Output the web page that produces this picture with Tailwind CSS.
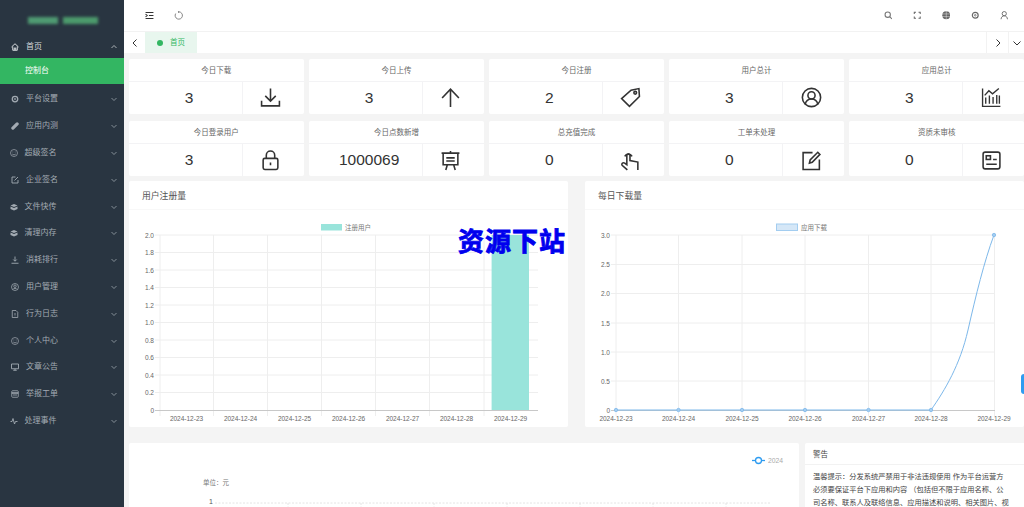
<!DOCTYPE html>
<html lang="zh-CN">

<head>
    <meta charset="UTF-8">
    <title>控制台</title>
    <script src="https://cdn.jsdelivr.net/npm/@tailwindcss/browser@4"></script>
</head>

<body class="bg-[#f4f4f4] overflow-hidden [font-family:'Liberation_Sans','Noto_Sans_CJK_SC',sans-serif]">
    <div class="relative flex w-[1024px] h-[507px] overflow-hidden">

        <!-- Sidebar -->
        <aside class="w-[123.5px] shrink-0 bg-[#293541] text-[#a3abb3] text-[8px] leading-none">
            <div class="h-[33px] flex items-center gap-[5px] pl-[28px] pt-[7px]">
                <div class="w-[30px] h-[7px] bg-[#4f9a72] blur-[1.5px]"></div>
                <div class="w-[35px] h-[7px] bg-[#4c9a6c] blur-[1.5px]"></div>
            </div>
            <nav>
                <div class="h-[25px] flex items-center pt-[2px] pl-[11px] pr-[7px] gap-[7px] text-[#d5d9dc]">
                    <svg class="w-[8px] h-[8px]" viewBox="0 0 16 16" fill="none" stroke="currentColor" stroke-width="2"><path d="M1 8 8 1.5 15 8M3.5 7v7.5h9V7M6.5 14.5V10h3v4.5"/></svg>
                    <span class="flex-1">首页</span>
                    <svg class="w-[6px] h-[6px]" viewBox="0 0 12 12" fill="none" stroke="currentColor" stroke-width="1.5"><path d="m1 8 5-5 5 5"/></svg>
                </div>
                <div class="h-[25.5px] mb-[2.6px] flex items-center pt-[1px] pl-[25px] bg-[#33b662] text-white">控制台</div>
                <div class="h-[26.8px] flex items-center pl-[11px] pr-[7px] gap-[7px]">
                    <svg class="w-[8px] h-[8px]" viewBox="0 0 16 16" fill="none" stroke="currentColor" stroke-width="2.5"><circle cx="8" cy="8" r="5.5"/><circle cx="8" cy="8" r="1.5" stroke-width="1.5"/></svg>
                    <span class="flex-1">平台设置</span>
                    <svg class="w-[6px] h-[6px]" viewBox="0 0 12 12" fill="none" stroke="currentColor" stroke-width="1.5"><path d="m1 4 5 5 5-5"/></svg>
                </div>
                <div class="h-[26.8px] flex items-center pl-[11px] pr-[7px] gap-[7px]">
                    <svg class="w-[8px] h-[8px]" viewBox="0 0 16 16" fill="currentColor"><path d="M1.5 10 10 1.5a3 3 0 0 1 4.5 4.5L6 14.5A3 3 0 0 1 1.5 10Z"/></svg>
                    <span class="flex-1">应用内测</span>
                    <svg class="w-[6px] h-[6px]" viewBox="0 0 12 12" fill="none" stroke="currentColor" stroke-width="1.5"><path d="m1 4 5 5 5-5"/></svg>
                </div>
                <div class="h-[26.8px] flex items-center pl-[10px] pr-[7px] gap-[6.5px]">
                    <svg class="w-[8px] h-[8px]" viewBox="0 0 16 16" fill="none" stroke="currentColor" stroke-width="1.4"><circle cx="8" cy="8" r="7"/><path d="M4.5 10c1.5 2 5.500 2 7 0M5 6h1.5M9.5 6H11"/></svg>
                    <span class="flex-1">超级签名</span>
                    <svg class="w-[6px] h-[6px]" viewBox="0 0 12 12" fill="none" stroke="currentColor" stroke-width="1.5"><path d="m1 4 5 5 5-5"/></svg>
                </div>
                <div class="h-[26.8px] flex items-center pl-[11px] pr-[7px] gap-[7px]">
                    <svg class="w-[8px] h-[8px]" viewBox="0 0 16 16" fill="none" stroke="currentColor" stroke-width="1.8"><path d="M9 2H2v12h12V8M7 9l7-7"/></svg>
                    <span class="flex-1">企业签名</span>
                    <svg class="w-[6px] h-[6px]" viewBox="0 0 12 12" fill="none" stroke="currentColor" stroke-width="1.5"><path d="m1 4 5 5 5-5"/></svg>
                </div>
                <div class="h-[26.8px] flex items-center pl-[10px] pr-[7px] gap-[6.5px]">
                    <svg class="w-[8px] h-[8px]" viewBox="0 0 16 16" fill="currentColor"><path d="M8 2 15 5 8 8 1 5ZM1 7l7 3 7-3v5l-7 3-7-3Z"/></svg>
                    <span class="flex-1">文件快传</span>
                    <svg class="w-[6px] h-[6px]" viewBox="0 0 12 12" fill="none" stroke="currentColor" stroke-width="1.5"><path d="m1 4 5 5 5-5"/></svg>
                </div>
                <div class="h-[26.8px] flex items-center pl-[10px] pr-[7px] gap-[6.5px]">
                    <svg class="w-[8px] h-[8px]" viewBox="0 0 16 16" fill="currentColor"><path d="M8 2 15 5 8 8 1 5ZM1 7l7 3 7-3v5l-7 3-7-3Z"/></svg>
                    <span class="flex-1">清理内存</span>
                    <svg class="w-[6px] h-[6px]" viewBox="0 0 12 12" fill="none" stroke="currentColor" stroke-width="1.5"><path d="m1 4 5 5 5-5"/></svg>
                </div>
                <div class="h-[26.8px] flex items-center pl-[11px] pr-[7px] gap-[7px]">
                    <svg class="w-[8px] h-[8px]" viewBox="0 0 16 16" fill="none" stroke="currentColor" stroke-width="1.8"><path d="M8 1v9M4.5 7 8 10.5 11.5 7M1 14.5h14"/></svg>
                    <span class="flex-1">消耗排行</span>
                    <svg class="w-[6px] h-[6px]" viewBox="0 0 12 12" fill="none" stroke="currentColor" stroke-width="1.5"><path d="m1 4 5 5 5-5"/></svg>
                </div>
                <div class="h-[26.8px] flex items-center pl-[11px] pr-[7px] gap-[7px]">
                    <svg class="w-[8px] h-[8px]" viewBox="0 0 16 16" fill="none" stroke="currentColor" stroke-width="1.5"><circle cx="8" cy="8" r="7"/><circle cx="8" cy="6.5" r="2.5"/><path d="M3.5 13c1-3 8-3 9 0"/></svg>
                    <span class="flex-1">用户管理</span>
                    <svg class="w-[6px] h-[6px]" viewBox="0 0 12 12" fill="none" stroke="currentColor" stroke-width="1.5"><path d="m1 4 5 5 5-5"/></svg>
                </div>
                <div class="h-[26.8px] flex items-center pl-[11px] pr-[7px] gap-[7px]">
                    <svg class="w-[8px] h-[8px]" viewBox="0 0 16 16" fill="none" stroke="currentColor" stroke-width="1.6"><path d="M2.5 1H10l3.5 3.5V15h-11ZM8 6v5M8 12.5v.5"/></svg>
                    <span class="flex-1">行为日志</span>
                    <svg class="w-[6px] h-[6px]" viewBox="0 0 12 12" fill="none" stroke="currentColor" stroke-width="1.5"><path d="m1 4 5 5 5-5"/></svg>
                </div>
                <div class="h-[26.8px] flex items-center pl-[11px] pr-[7px] gap-[7px]">
                    <svg class="w-[8px] h-[8px]" viewBox="0 0 16 16" fill="none" stroke="currentColor" stroke-width="1.4"><circle cx="8" cy="8" r="7"/><path d="M4.5 10c1.5 2 5.5 2 7 0M5 6h1.5M9.5 6H11"/></svg>
                    <span class="flex-1">个人中心</span>
                    <svg class="w-[6px] h-[6px]" viewBox="0 0 12 12" fill="none" stroke="currentColor" stroke-width="1.5"><path d="m1 4 5 5 5-5"/></svg>
                </div>
                <div class="h-[26.8px] flex items-center pl-[11px] pr-[7px] gap-[7px]">
                    <svg class="w-[8px] h-[8px]" viewBox="0 0 16 16" fill="none" stroke="currentColor" stroke-width="1.8"><path d="M1 2h14v9.5H1ZM8 11.5v3M4.5 14.5h7"/></svg>
                    <span class="flex-1">文章公告</span>
                    <svg class="w-[6px] h-[6px]" viewBox="0 0 12 12" fill="none" stroke="currentColor" stroke-width="1.5"><path d="m1 4 5 5 5-5"/></svg>
                </div>
                <div class="h-[26.8px] flex items-center pl-[11px] pr-[7px] gap-[7px]">
                    <svg class="w-[8px] h-[8px]" viewBox="0 0 16 16" fill="none" stroke="currentColor" stroke-width="1.6"><rect x="1.5" y="1.5" width="13" height="13" rx="1.5"/><path d="M1.5 6h13" stroke-width="3"/><path d="M4 10h8"/></svg>
                    <span class="flex-1">举报工单</span>
                    <svg class="w-[6px] h-[6px]" viewBox="0 0 12 12" fill="none" stroke="currentColor" stroke-width="1.5"><path d="m1 4 5 5 5-5"/></svg>
                </div>
                <div class="h-[26.8px] flex items-center pl-[10px] pr-[7px] gap-[6.5px]">
                    <svg class="w-[8px] h-[8px]" viewBox="0 0 16 16" fill="none" stroke="currentColor" stroke-width="1.8"><path d="M1 9h3l2-6 3 11 2-5h4"/></svg>
                    <span class="flex-1">处理事件</span>
                    <svg class="w-[6px] h-[6px]" viewBox="0 0 12 12" fill="none" stroke="currentColor" stroke-width="1.5"><path d="m1 4 5 5 5-5"/></svg>
                </div>
            </nav>
        </aside>

        <!-- Main -->
        <main class="flex-1 min-w-0 flex flex-col">
            <!-- Top bar -->
            <header class="h-[32px] shrink-0 bg-white border-b border-[#f2f2f2] flex items-center text-[#555]">
                <div class="flex items-center gap-[20px] pl-[21px]">
                    <svg class="w-[9px] h-[9px]" viewBox="0 0 16 16" fill="none" stroke="#333" stroke-width="1.8"><path d="M1 2.5h14M7 8h8M1 13.5h14M1 5.5 4 8l-3 2.500"/></svg>
                    <svg class="w-[9px] h-[9px]" viewBox="0 0 16 16" fill="none" stroke="#666" stroke-width="1.4"><path d="M9 1.500a6.500 6.500 0 1 1-6 3M9 1.500 7 0M9 1.500 7.500 3.500"/></svg>
                </div>
                <div class="ml-auto flex items-center gap-[20.5px] pr-[16px]">
                    <svg class="w-[8.5px] h-[8.5px]" viewBox="0 0 16 16" fill="none" stroke="#777" stroke-width="2"><circle cx="7" cy="7" r="5"/><path d="m11 11 4 4"/></svg>
                    <svg class="w-[8.5px] h-[8.5px]" viewBox="-2 -2 20 20" fill="none" stroke="#666" stroke-width="2.4"><path d="M1 5V1h4M11 1h4v4M15 11v4h-4M5 15H1v-4"/></svg>
                    <svg class="w-[8.5px] h-[8.5px]" viewBox="0 0 16 16" fill="#666"><circle cx="8" cy="8" r="7.5"/><path d="M0 5.500h16M0 10.500h16M8 0v16" stroke="#fff" stroke-width=".8"/></svg>
                    <svg class="w-[8.5px] h-[8.5px]" viewBox="0 0 16 16" fill="none" stroke="#666" stroke-width="2.2"><circle cx="8" cy="8" r="5.5"/><circle cx="8" cy="8" r="1.5" stroke-width="1.5"/></svg>
                    <svg class="w-[8.5px] h-[8.5px]" viewBox="0 0 16 16" fill="none" stroke="#666" stroke-width="1.7"><circle cx="8" cy="5" r="4"/><path d="M2 15.500c0-4 3-6.500 6-6.500s6 2.500 6 6.500"/></svg>
                </div>
            </header>

            <!-- Tabs -->
            <div class="h-[21px] shrink-0 bg-white flex items-stretch">
                <div class="w-[21.5px] flex items-center pl-[8px]">
                    <svg class="w-[6px] h-[8px]" viewBox="0 0 6 8" fill="none" stroke="#333" stroke-width="1"><path d="M4.500.5 1 4l3.500 3.500"/></svg>
                </div>
                <div class="w-[52px] bg-[#e8f6ee] flex items-center pl-[12px] gap-[7px] text-[7.5px] text-[#33b662]">
                    <span class="w-[6px] h-[6px] rounded-full bg-[#33b662]"></span>
                    <span>首页</span>
                </div>
                <div class="ml-auto w-[22px] border-l border-[#f2f2f2] flex items-center justify-center">
                    <svg class="w-[6px] h-[8px]" viewBox="0 0 6 8" fill="none" stroke="#333" stroke-width="1"><path d="M1.500.5 5 4 1.500 7.500"/></svg>
                </div>
                <div class="w-[16px] border-l border-[#f2f2f2] flex items-center justify-center">
                    <svg class="w-[8px] h-[6px]" viewBox="0 0 8 6" fill="none" stroke="#333" stroke-width="1"><path d="M.5 1.500 4 5l3.500-3.500"/></svg>
                </div>
            </div>

            <!-- Content -->
            <div class="flex-1 min-h-0 pl-[5.5px] pt-[6px] flex flex-col w-[900.5px]">
                <!-- Stat cards -->
                <div class="grid grid-cols-5 gap-x-[5.5px] gap-y-[7.5px] text-[#333]">
                    <div class="h-[54.7px] bg-white rounded-[2px] flex flex-col">
                        <div class="h-[23px] pt-[1px] border-b border-[#f3f3f5] flex items-center justify-center text-[7.5px] text-[#666]">今日下载</div>
                        <div class="flex-1 flex items-center">
                            <div class="w-[114px] h-full pl-[7px] border-r border-[#f3f3f5] flex items-center justify-center text-[15.5px]">3</div>
                            <div class="flex-1 pr-[5px] flex items-center justify-center">
                                <svg class="w-[21px] h-[21px]" viewBox="0 0 20 20" fill="none" stroke="#333" stroke-width="1.5"><path d="M10 1.500v12M5 8.500l5 5 5-5M1.500 13v5h17v-5"/></svg>
                            </div>
                        </div>
                    </div>
                    <div class="h-[54.7px] bg-white rounded-[2px] flex flex-col">
                        <div class="h-[23px] pt-[1px] border-b border-[#f3f3f5] flex items-center justify-center text-[7.5px] text-[#666]">今日上传</div>
                        <div class="flex-1 flex items-center">
                            <div class="w-[114px] h-full pl-[7px] border-r border-[#f3f3f5] flex items-center justify-center text-[15.5px]">3</div>
                            <div class="flex-1 pr-[5px] flex items-center justify-center">
                                <svg class="w-[21px] h-[21px]" viewBox="0 0 20 20" fill="none" stroke="#333" stroke-width="1.5"><path d="M10 2v17M2 10.500 10 2l8 8.500"/></svg>
                            </div>
                        </div>
                    </div>
                    <div class="h-[54.7px] bg-white rounded-[2px] flex flex-col">
                        <div class="h-[23px] pt-[1px] border-b border-[#f3f3f5] flex items-center justify-center text-[7.5px] text-[#666]">今日注册</div>
                        <div class="flex-1 flex items-center">
                            <div class="w-[114px] h-full pl-[7px] border-r border-[#f3f3f5] flex items-center justify-center text-[15.5px]">2</div>
                            <div class="flex-1 pr-[5px] flex items-center justify-center">
                                <svg class="w-[21px] h-[21px]" viewBox="0 0 20 20" fill="none" stroke="#333" stroke-width="1.5"><path d="M1.500 11 10.500 3 18 1.500 18.500 9 9 18.500Z"/><circle cx="14.500" cy="5.500" r="1.300"/></svg>
                            </div>
                        </div>
                    </div>
                    <div class="h-[54.7px] bg-white rounded-[2px] flex flex-col">
                        <div class="h-[23px] pt-[1px] border-b border-[#f3f3f5] flex items-center justify-center text-[7.5px] text-[#666]">用户总计</div>
                        <div class="flex-1 flex items-center">
                            <div class="w-[114px] h-full pl-[7px] border-r border-[#f3f3f5] flex items-center justify-center text-[15.5px]">3</div>
                            <div class="flex-1 pr-[5px] flex items-center justify-center">
                                <svg class="w-[21px] h-[21px]" viewBox="0 0 20 20" fill="none" stroke="#333" stroke-width="1.5"><circle cx="10" cy="10" r="8.700"/><circle cx="10" cy="8" r="3.400"/><path d="M4 16.500c.8-3.500 3-5 6-5s5.200 1.500 6 5"/></svg>
                            </div>
                        </div>
                    </div>
                    <div class="h-[54.7px] bg-white rounded-[2px] flex flex-col">
                        <div class="h-[23px] pt-[1px] border-b border-[#f3f3f5] flex items-center justify-center text-[7.5px] text-[#666]">应用总计</div>
                        <div class="flex-1 flex items-center">
                            <div class="w-[114px] h-full pl-[7px] border-r border-[#f3f3f5] flex items-center justify-center text-[15.5px]">3</div>
                            <div class="flex-1 pr-[5px] flex items-center justify-center">
                                <svg class="w-[21px] h-[21px]" viewBox="0 0 20 20" fill="none" stroke="#333" stroke-width="1.3"><path d="M1.500 1.500v17h17M4.500 16v-6M8 16V8M11.500 16V9.500M15 16V7.500M17.500 16V8M3.500 8 7.500 3.500l3.500 3 6-5"/></svg>
                            </div>
                        </div>
                    </div>

                    <div class="h-[54.7px] bg-white rounded-[2px] flex flex-col">
                        <div class="h-[23px] pt-[1px] border-b border-[#f3f3f5] flex items-center justify-center text-[7.5px] text-[#666]">今日登录用户</div>
                        <div class="flex-1 flex items-center">
                            <div class="w-[114px] h-full pl-[7px] border-r border-[#f3f3f5] flex items-center justify-center text-[15.5px]">3</div>
                            <div class="flex-1 pr-[5px] flex items-center justify-center">
                                <svg class="w-[21px] h-[21px]" viewBox="0 0 20 20" fill="none" stroke="#333" stroke-width="1.5"><rect x="3" y="8" width="14" height="10.500" rx="1.500"/><path d="M6 8V5a4 4 0 0 1 8 0v3M10 12v2.500"/></svg>
                            </div>
                        </div>
                    </div>
                    <div class="h-[54.7px] bg-white rounded-[2px] flex flex-col">
                        <div class="h-[23px] pt-[1px] border-b border-[#f3f3f5] flex items-center justify-center text-[7.5px] text-[#666]">今日点数新增</div>
                        <div class="flex-1 flex items-center">
                            <div class="w-[114px] h-full pl-[7px] border-r border-[#f3f3f5] flex items-center justify-center text-[15.5px]">1000069</div>
                            <div class="flex-1 pr-[5px] flex items-center justify-center">
                                <svg class="w-[21px] h-[21px]" viewBox="0 0 20 20" fill="none" stroke="#333" stroke-width="1.5"><path d="M10 1v2M1.500 3h17M3 3v11h14V3M6 7.500h8M6 10.500h8M7 14l-1.500 5M13 14l1.500 5"/></svg>
                            </div>
                        </div>
                    </div>
                    <div class="h-[54.7px] bg-white rounded-[2px] flex flex-col">
                        <div class="h-[23px] pt-[1px] border-b border-[#f3f3f5] flex items-center justify-center text-[7.5px] text-[#666]">总充值完成</div>
                        <div class="flex-1 flex items-center">
                            <div class="w-[114px] h-full pl-[7px] border-r border-[#f3f3f5] flex items-center justify-center text-[15.5px]">0</div>
                            <div class="flex-1 pr-[5px] flex items-center justify-center">
                                <svg class="w-[21px] h-[21px]" viewBox="0 0 20 20" fill="none" stroke="#333" stroke-width="1.5"><path d="M7 19 2 14.500c-1-1.500 1-3 2.500-2L6.500 14V5a1.500 1.500 0 0 1 3 0v5l7.500 1.500V19M4.500 6a4 4 0 0 1 7 0"/></svg>
                            </div>
                        </div>
                    </div>
                    <div class="h-[54.7px] bg-white rounded-[2px] flex flex-col">
                        <div class="h-[23px] pt-[1px] border-b border-[#f3f3f5] flex items-center justify-center text-[7.5px] text-[#666]">工单未处理</div>
                        <div class="flex-1 flex items-center">
                            <div class="w-[114px] h-full pl-[7px] border-r border-[#f3f3f5] flex items-center justify-center text-[15.5px]">0</div>
                            <div class="flex-1 pr-[5px] flex items-center justify-center">
                                <svg class="w-[21px] h-[21px]" viewBox="0 0 20 20" fill="none" stroke="#333" stroke-width="1.5"><path d="M11 2.500H2v16h15.500V9M8 12.500l.7-3L16 2.200l2 2-7.300 7.500Z"/></svg>
                            </div>
                        </div>
                    </div>
                    <div class="h-[54.7px] bg-white rounded-[2px] flex flex-col">
                        <div class="h-[23px] pt-[1px] border-b border-[#f3f3f5] flex items-center justify-center text-[7.5px] text-[#666]">资质未审核</div>
                        <div class="flex-1 flex items-center">
                            <div class="w-[114px] h-full pl-[7px] border-r border-[#f3f3f5] flex items-center justify-center text-[15.5px]">0</div>
                            <div class="flex-1 pr-[5px] flex items-center justify-center">
                                <svg class="w-[21px] h-[21px]" viewBox="0 0 20 20" fill="none" stroke="#333" stroke-width="1.5"><rect x="2" y="2" width="16" height="16" rx="2"/><rect x="5" y="5.500" width="4" height="3.500"/><path d="M11.500 9H15M5 13.500h10"/></svg>
                            </div>
                        </div>
                    </div>
                </div>

                <!-- Charts -->
                <div class="mt-[5px] grid grid-cols-2 gap-x-[17px]">
                    <div class="h-[246px] bg-white rounded-[2px] flex flex-col">
                        <div class="h-[29px] pt-[3px] border-b border-[#f8f8f8] flex items-center pl-[13px] text-[8.8px] text-[#555]">用户注册量</div>
                        <svg class="w-[439.5px] h-[217px]" viewBox="129 210 439.5 217">
                            <g fill="none" stroke="#eeeeee" stroke-width="1">
                                <path d="M155 235H538M155 252.500H538M155 270H538M155 287.500H538M155 305H538M155 322.500H538M155 340H538M155 357.500H538M155 375H538M155 392.500H538"/>
                                <path d="M160 235V416M213.500 235V416M267.500 235V416M321.500 235V416M375.500 235V416M429.500 235V416M484 235V416"/>
                            </g>
                            <path d="M155 410.500H538" stroke="#c8c8c8" fill="none"/>
                            <rect x="321" y="224" width="21" height="6.500" fill="#99e4db"/>
                            <text x="345" y="229.800" font-size="6.500" fill="#777">注册用户</text>
                            <rect x="491.600" y="235" width="37.400" height="175" fill="#99e4db"/>
                            <g font-size="6.500" fill="#666" text-anchor="end">
                                <text x="154" y="237.500">2.0</text><text x="154" y="255">1.8</text><text x="154" y="272.500">1.6</text><text x="154" y="290">1.4</text><text x="154" y="307.500">1.2</text><text x="154" y="325">1.0</text><text x="154" y="342.500">0.8</text><text x="154" y="360">0.6</text><text x="154" y="377.500">0.4</text><text x="154" y="395">0.2</text><text x="154" y="412.500">0</text>
                            </g>
                            <g font-size="6.500" fill="#666" text-anchor="middle">
                                <text x="186.500" y="420.500">2024-12-23</text><text x="240.500" y="420.500">2024-12-24</text><text x="294.500" y="420.500">2024-12-25</text><text x="348.500" y="420.500">2024-12-26</text><text x="402.500" y="420.500">2024-12-27</text><text x="456.500" y="420.500">2024-12-28</text><text x="510.500" y="420.500">2024-12-29</text>
                            </g>
                        </svg>
                    </div>
                    <div class="h-[246px] bg-white rounded-[2px] flex flex-col">
                        <div class="h-[29px] pt-[3px] border-b border-[#f8f8f8] flex items-center pl-[13px] text-[8.8px] text-[#555]">每日下载量</div>
                        <svg class="w-[439.5px] h-[217px]" viewBox="585 210 439.5 217">
                            <g fill="none" stroke="#eeeeee" stroke-width="1">
                                <path d="M611 235H995M611 264.500H995M611 293.500H995M611 323H995M611 352H995M611 381H995"/>
                                <path d="M616 235V416M678.500 235V416M742 235V416M805 235V416M868.500 235V416M931 235V416M994.500 235V416"/>
                            </g>
                            <path d="M611 410.500H995" stroke="#c8c8c8" fill="none"/>
                            <rect x="776.500" y="224" width="21" height="6.500" fill="#d5e7f7" stroke="#a3cdf0"/>
                            <text x="801" y="229.800" font-size="6.500" fill="#777">应用下载</text>
                            <path d="M616 410H931C945 390 960 365 968 330S984 262 994 235" fill="none" stroke="#7db8ea" stroke-width="1"/>
                            <g fill="#a3cdf0" stroke="#7db8ea" stroke-width=".8">
                                <circle cx="616" cy="410" r="1.700"/><circle cx="678.500" cy="410" r="1.700"/><circle cx="742" cy="410" r="1.700"/><circle cx="805" cy="410" r="1.700"/><circle cx="868.500" cy="410" r="1.700"/><circle cx="931" cy="410" r="1.700"/><circle cx="994" cy="235" r="1.700"/>
                            </g>
                            <g font-size="6.500" fill="#666" text-anchor="end">
                                <text x="610" y="237.500">3.0</text><text x="610" y="267">2.5</text><text x="610" y="296">2.0</text><text x="610" y="325.500">1.5</text><text x="610" y="354.500">1.0</text><text x="610" y="383.500">0.5</text><text x="610" y="412.500">0</text>
                            </g>
                            <g font-size="6.500" fill="#666" text-anchor="middle">
                                <text x="616" y="420.500">2024-12-23</text><text x="678.500" y="420.500">2024-12-24</text><text x="742" y="420.500">2024-12-25</text><text x="805" y="420.500">2024-12-26</text><text x="868.500" y="420.500">2024-12-27</text><text x="931" y="420.500">2024-12-28</text><text x="994" y="420.500">2024-12-29</text>
                            </g>
                        </svg>
                    </div>
                </div>

                <!-- Bottom row -->
                <div class="mt-[16px] flex gap-[6px]">
                    <div class="w-[670px] shrink-0 h-[100px] bg-white rounded-[2px]">
                        <svg class="w-[670px] h-[64px]" viewBox="129 443 670 64">
                            <path d="M752 460.500H765" stroke="#2f9cf0" stroke-width="1.300"/>
                            <circle cx="758.500" cy="460.500" r="3" fill="#fff" stroke="#2f9cf0" stroke-width="1.300"/>
                            <text x="768" y="462.800" font-size="6.800" fill="#aaa">2024</text>
                            <text x="203" y="484.500" font-size="6.500" fill="#777">单位&#65306;元</text>
                            <text x="209" y="503.500" font-size="7" fill="#555">1</text>
                            <path d="M215 503H770M288 503V507M361 503V507M434 503V507M507 503V507M580 503V507M653 503V507M726 503V507" stroke="#e4e4e4" stroke-width="1" stroke-dasharray="2 1.500" fill="none"/>
                        </svg>
                    </div>
                    <div class="w-[300px] shrink-0 h-[100px] bg-white rounded-[2px]">
                        <div class="h-[22.5px] pt-[2px] border-b border-[#f2f2f2] flex items-center pl-[8px] text-[7.5px] text-[#444]">警告</div>
                        <div class="pl-[8px] pt-[5px] text-[7.25px] leading-[13px] text-[#444] whitespace-nowrap">
                            <div>温馨提示&#65306;分发系统严禁用于非法违规使用 作为平台运营方</div>
                            <div>必须要保证平台下应用和内容 &#65288;包括但不限于应用名称、公</div>
                            <div>司名称、联系人及联络信息、应用描述和说明、相关图片、视</div>
                        </div>
                    </div>
                </div>
            </div>
        </main>

        <!-- Watermark over the chart row -->
        <div class="absolute left-[458px] top-[228px] text-[26px] leading-[28px] font-bold text-[#0000ee] tracking-[1px] whitespace-nowrap [-webkit-text-stroke:0.8px_#0000ee]">资源下站</div>

        <!-- Floating side tab -->
        <div class="absolute right-0 top-[374px] w-[3px] h-[20px] bg-[#2f9cf0] rounded-l-[3px]"></div>
    </div>
</body>

</html>
